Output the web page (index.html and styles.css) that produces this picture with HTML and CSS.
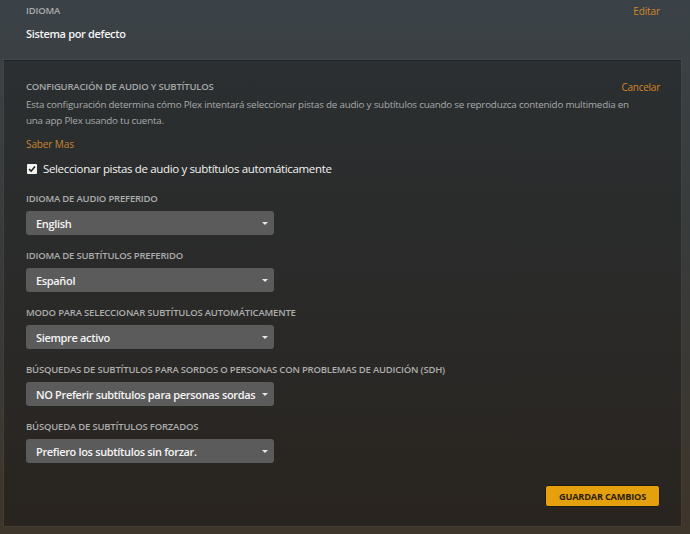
FILE: index.html
```html
<!DOCTYPE html>
<html lang="es">
<head>
<meta charset="utf-8">
<title>Idioma</title>
<link rel="stylesheet" href="styles.css">
</head>
<body>
<div class="page">
  <section class="top">
    <div class="row">
      <span class="cap">IDIOMA</span>
      <a class="link" href="#">Editar</a>
    </div>
    <div class="value">Sistema por defecto</div>
  </section>

  <section class="panel">
    <div class="row head">
      <span class="cap">CONFIGURACIÓN DE AUDIO Y SUBTÍTULOS</span>
      <a class="link cancel" href="#">Cancelar</a>
    </div>
    <p class="desc">Esta configuración determina cómo Plex intentará seleccionar pistas de audio y subtítulos cuando se reproduzca contenido multimedia en una app Plex usando tu cuenta.</p>
    <a class="link more" href="#">Saber Mas</a>
    <label class="check">
      <span class="box"><svg width="8" height="8" viewBox="0 0 8 8"><path d="M1 4.2 L3.1 6.2 L7 1.6" fill="none" stroke="#222" stroke-width="1.6"/></svg></span>
      Seleccionar pistas de audio y subtítulos automáticamente
    </label>

    <div class="groups">
      <div class="group">
        <div class="cap">IDIOMA DE AUDIO PREFERIDO</div>
        <div class="select"><span>English</span><i class="arrow"></i></div>
      </div>
      <div class="group">
        <div class="cap">IDIOMA DE SUBTÍTULOS PREFERIDO</div>
        <div class="select"><span>Español</span><i class="arrow"></i></div>
      </div>
      <div class="group">
        <div class="cap">MODO PARA SELECCIONAR SUBTÍTULOS AUTOMÁTICAMENTE</div>
        <div class="select"><span>Siempre activo</span><i class="arrow"></i></div>
      </div>
      <div class="group">
        <div class="cap">BÚSQUEDAS DE SUBTÍTULOS PARA SORDOS O PERSONAS CON PROBLEMAS DE AUDICIÓN (SDH)</div>
        <div class="select"><span>NO Preferir subtítulos para personas sordas</span><i class="arrow"></i></div>
      </div>
      <div class="group">
        <div class="cap">BÚSQUEDA DE SUBTÍTULOS FORZADOS</div>
        <div class="select"><span>Prefiero los subtítulos sin forzar.</span><i class="arrow"></i></div>
      </div>
    </div>

    <div class="actions">
      <button class="save">GUARDAR CAMBIOS</button>
    </div>
  </section>
</div>
</body>
</html>
```

FILE: styles.css
```css
* { box-sizing: border-box; }
html, body { margin: 0; height: 100%; }
body {
  font-family: "Open Sans", "Noto Sans", sans-serif;
  background: linear-gradient(180deg, #3b4247 0%, #383b3b 45%, #3e352b 100%);
  color: #fff;
  overflow: hidden;
}
.page { height: 534px; display: flex; flex-direction: column; }
.top { padding: 4px 30px 17px 26px; }
.row { display: flex; justify-content: space-between; align-items: center; }
.cap {
  font-size: 9.5px;
  line-height: 14px;
  font-weight: 600;
  letter-spacing: -0.2px;
  color: #a8abad;
  white-space: nowrap;
}
.link {
  font-size: 10px;
  line-height: 14px;
  font-weight: 500;
  letter-spacing: -0.1px;
  color: #d0862a;
  text-decoration: none;
}
.cancel { letter-spacing: -0.25px; }
.value {
  margin-top: 7px;
  font-size: 11px;
  line-height: 18px;
  font-weight: 600;
  letter-spacing: -0.34px;
  color: #f4f4f4;
}
.panel {
  margin: 0 9px 0 4px;
  height: 466px;
  background: linear-gradient(180deg, #2b2f31 0%, #2a2a29 50%, #29241f 100%);
  border-top: 1px solid #1f2326;
  box-shadow: 0 0 0 1px rgba(255,255,255,0.03);
  padding: 19px 21px 19px 22px;
  display: flex;
  flex-direction: column;
}
.panel .head .cap { color: #a5a8a9; }
.desc {
  margin: 3px 25px 0 0;
  font-size: 9.8px;
  line-height: 16px;
  letter-spacing: -0.2px;
  color: #a8aaab;
}
.more { margin-top: 7px; line-height: 16px; align-self: flex-start; color: #c8862f; }
.check {
  margin-top: 8px;
  display: flex;
  align-items: center;
  gap: 6px;
  font-size: 11.5px;
  line-height: 18px;
  font-weight: 500;
  letter-spacing: -0.35px;
  color: #f2f2f2;
}
.box {
  width: 10px; height: 10px;
  margin-left: 1px;
  background: #f2f2f2;
  border-radius: 1px;
  display: flex; align-items: center; justify-content: center;
}
.groups { margin-top: 14px; display: flex; flex-direction: column; gap: 14px; }
.group { display: flex; flex-direction: column; gap: 5px; }
.group .cap { color: #adadad; }
.select {
  width: 248px;
  height: 24px;
  background: #5b5b5b;
  border-radius: 3px;
  display: flex;
  align-items: center;
  justify-content: space-between;
  padding: 0 6px 0 10px;
  font-size: 11px;
  font-weight: 600;
  letter-spacing: -0.34px;
  color: #f5f5f5;
  white-space: nowrap;
}
.arrow {
  width: 0; height: 0;
  border-left: 3px solid transparent;
  border-right: 3px solid transparent;
  border-top: 3px solid #e8e8e8;
}
.actions { margin-top: auto; display: flex; justify-content: flex-end; }
.save {
  width: 115px;
  height: 22px;
  border: 1px solid #1d1a14;
  border-radius: 3px;
  background: #e5a00d;
  color: #2a1e0a;
  font-family: inherit;
  font-size: 9.2px;
  font-weight: 700;
  letter-spacing: -0.2px;
  padding: 0;
}
```
